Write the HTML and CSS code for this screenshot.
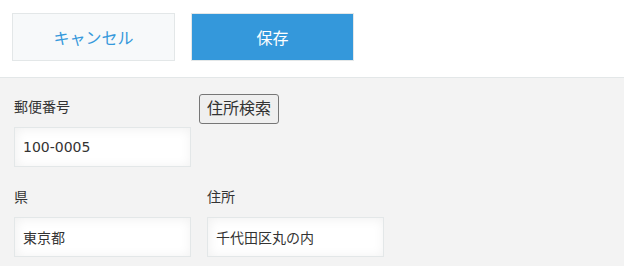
FILE: index.html
```html
<!DOCTYPE html>
<html lang="ja">
<head>
    <meta charset="UTF-8">
    <meta name="viewport" content="width=device-width, initial-scale=1.0">
    <title>住所入力</title>
    <link rel="stylesheet" href="styles.css">
</head>
<body>
    <div class="toolbar">
        <button class="btn btn-cancel">キャンセル</button>
        <button class="btn btn-save">保存</button>
    </div>
    <div class="record-form">
        <div class="row row-tight">
            <div class="field">
                <div class="field-label">郵便番号</div>
                <input class="field-input" type="text" value="100-0005">
            </div>
            <div class="field-search">
                <button class="search-btn">住所検索</button>
            </div>
        </div>
        <div class="row">
            <div class="field">
                <div class="field-label">県</div>
                <input class="field-input" type="text" value="東京都">
            </div>
            <div class="field">
                <div class="field-label">住所</div>
                <input class="field-input" type="text" value="千代田区丸の内">
            </div>
        </div>
    </div>
</body>
</html>
```

FILE: styles.css
```css
* { box-sizing: border-box; }
body {
    margin: 0;
    background-color: #f3f3f3;
    font-family: "DejaVu Sans", "Noto Sans CJK JP", sans-serif;
    color: #333;
}
.toolbar {
    background-color: #fff;
    padding: 13px 12px 16px;
    border-bottom: 1px solid #e3e7e8;
    display: flex;
    gap: 16px;
}
.btn {
    width: 163px;
    height: 48px;
    border: 1px solid #e3e7e8;
    font-family: inherit;
    font-size: 16px;
    padding: 0;
    cursor: pointer;
}
.btn-cancel {
    background-color: #f7f9fa;
    color: #3498db;
}
.btn-save {
    background-color: #3498db;
    color: #fff;
}
.record-form {
    padding: 16px 14px 0;
}
.row {
    display: flex;
    gap: 16px;
}
.row + .row { margin-top: 17px; }
.row-tight { gap: 8px; }
.field { width: 177px; }
.field-label {
    font-size: 14px;
    line-height: 26px;
    margin-bottom: 7px;
}
.field-input {
    display: block;
    width: 177px;
    height: 40px;
    border: 1px solid #e3e7e8;
    background-color: #fff;
    box-shadow: 1px 1px 12px #f0f0f0 inset;
    padding: 0 8px;
    font-family: inherit;
    font-size: 14px;
    color: #333;
    outline: none;
}
.search-btn {
    font-family: inherit;
    font-size: 16px;
    line-height: 22px;
    height: 30px;
    padding: 1px 7px;
    color: #333;
    background-color: #efefef;
    border: 1px solid #767676;
    border-radius: 3px;
}
```
